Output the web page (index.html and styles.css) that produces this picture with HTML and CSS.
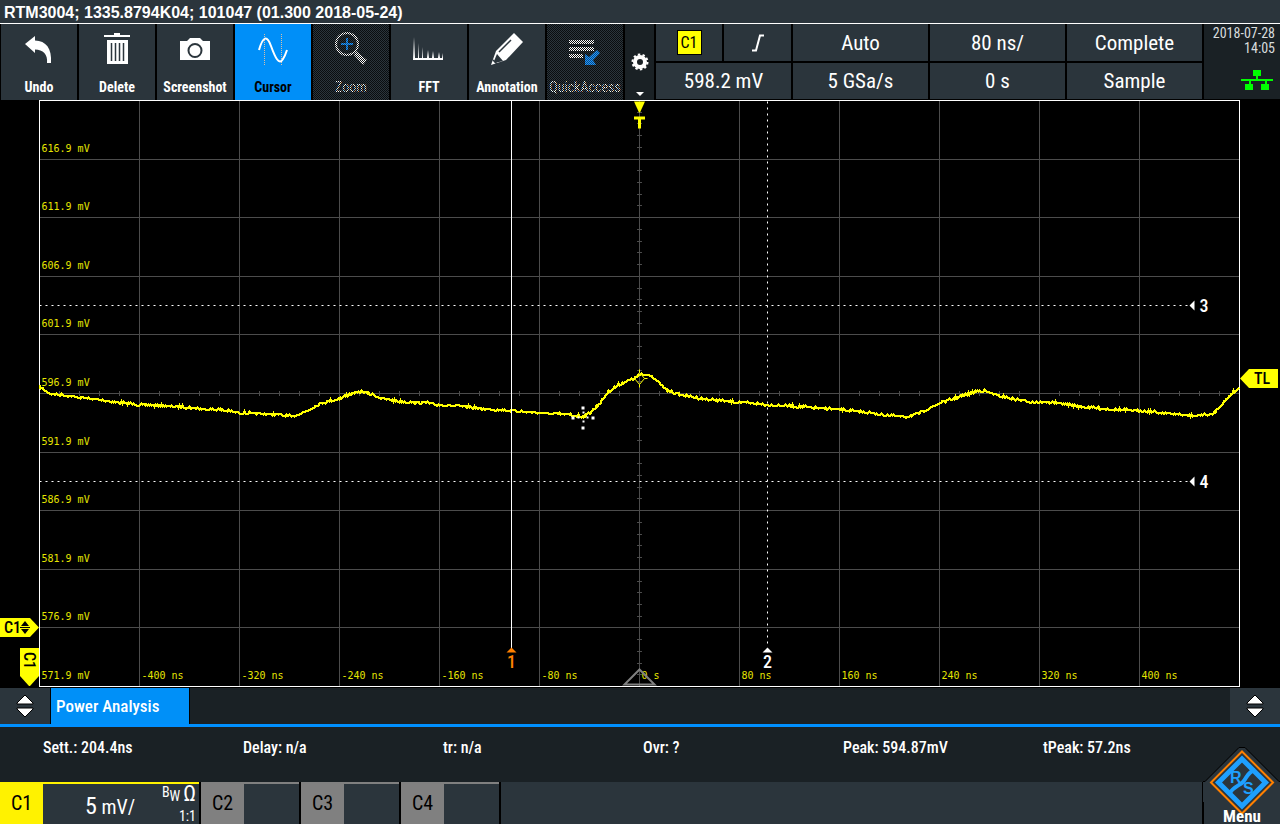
FILE: index.html
```html
<!DOCTYPE html>
<html lang="en">
<head>
  <meta charset="UTF-8">
  <title>RTM3004</title>
  <link rel="stylesheet" href="styles.css">
</head>
<body>

  <header class="title">RTM3004; 1335.8794K04; 101047 (01.300 2018-05-24)</header>

  <div class="topbar">
    <nav class="tools">
      <button class="tool">
        <svg width="36" height="36" viewBox="0 0 36 36"><path d="M4 12 14 4v4.500C25 9 31 16 30 31h-4c1-9-4-13-12-13.500V21z" fill="#fff"/></svg>
        <span>Undo</span>
      </button>
      <button class="tool">
        <svg width="36" height="36" viewBox="0 0 36 36"><path d="M5 3h10V1h6v2h10v2H5zM8 8h21v24H8z" fill="#fff"/><path d="M12.500 11v18M16.500 11v18M20.500 11v18M24.500 11v18" stroke="#2b353c" stroke-width="1.500"/></svg>
        <span>Delete</span>
      </button>
      <button class="tool">
        <svg width="36" height="36" viewBox="0 0 36 36"><path d="M3 9h7l3-3h10l3 3h7v19H3z" fill="#fff"/><circle cx="18" cy="18.500" r="6.500" fill="none" stroke="#2b353c" stroke-width="2"/></svg>
        <span>Screenshot</span>
      </button>
      <button class="tool active">
        <svg width="36" height="36" viewBox="0 0 36 36"><path d="M9.500 2v31M26.500 2v31" stroke="#d8c0a8" stroke-dasharray="1 1"/><path d="M4 18C8 4 12 3 16 14s8 20 12 13c2-3 3-6 4-9" fill="none" stroke="#fff" stroke-width="2"/></svg>
        <span>Cursor</span>
      </button>
      <button class="tool disabled" disabled>
        <svg width="36" height="36" viewBox="0 0 36 36">
          <defs>
            <pattern id="dither" width="2" height="2" patternUnits="userSpaceOnUse"><path d="M0 0h1v1H0zM1 1h1v1H1z" fill="#fff"/></pattern>
            <pattern id="dither-blue" width="2" height="2" patternUnits="userSpaceOnUse"><path d="M0 0h2v2H0z" fill="#0c4a80"/><path d="M0 0h1v1H0zM1 1h1v1H1z" fill="#1e96ff"/></pattern>
          </defs>
          <circle cx="14" cy="12" r="11" fill="none" stroke="url(#dither)" stroke-width="2"/>
          <path d="M13 6h2v5h5v2h-5v5h-2v-5H8v-2h5z" fill="url(#dither-blue)"/>
          <path d="m23 19 11 9-4 5-9-10z" fill="url(#dither)"/>
        </svg>
        <span>Zoom</span>
      </button>
      <button class="tool">
        <svg width="36" height="36" viewBox="0 0 36 36"><path d="M2 28 3 5l1 21h3V11l1 15h3V15l1 11h4l1-8 1 8h3l1-7 1 7h4l1-6 1 6h2l1-5v7z" fill="#fff"/></svg>
        <span>FFT</span>
      </button>
      <button class="tool">
        <svg width="36" height="36" viewBox="0 0 36 36"><path d="M25 1 34 10 17 28 2 33 7 19z" fill="#fff"/><path d="m8 22 6 7-8 2-1-2z" fill="#2b353c"/><path d="m10 20 12-12M4 28l4 4" stroke="#2b353c" stroke-width="1.500"/></svg>
        <span>Annotation</span>
      </button>
      <button class="tool disabled" disabled>
        <svg width="36" height="36" viewBox="0 0 36 36">
          <path d="M2 8h25v4H2zM2 15h25v4H2zM2 22h14v4H2z" fill="url(#dither)"/>
          <path d="m30 18 3 3-7 7 3 5H18V22l4 3z" fill="url(#dither-blue)"/>
        </svg>
        <span>QuickAccess</span>
      </button>
      <button class="gear" aria-label="Toolbar settings">
        <svg width="18" height="18" viewBox="0 0 18 18"><circle cx="9" cy="9" r="5" fill="none" stroke="#fff" stroke-width="4"/><circle cx="9" cy="9" r="7.500" fill="none" stroke="#fff" stroke-width="2" stroke-dasharray="2.400 2.310"/></svg>
        <svg width="8" height="4" viewBox="0 0 8 4"><path d="M0 0h8L4 4z" fill="#fff"/></svg>
      </button>
    </nav>

    <div class="readouts">
      <button><span class="source">C1</span></button>
      <button aria-label="Rising edge">
        <svg width="14" height="18" viewBox="0 0 14 18"><path d="M1 16.500h4L9 1.500h4" fill="none" stroke="#fff" stroke-width="2"/></svg>
      </button>
      <button>Auto</button>
      <button>80 ns/</button>
      <button>Complete</button>
      <button class="wide">598.2 mV</button>
      <button>5 GSa/s</button>
      <button>0 s</button>
      <button>Sample</button>
    </div>

    <div class="clock">
      <span>2018-07-28</span>
      <span>14:05</span>
      <svg width="32" height="20" viewBox="0 0 32 20"><path d="M12 0h8v6h-3v3h15v2h-6v3h2v6h-8v-6h4v-3H10v3h2v6H4v-6h4v-3H0V9h15V6h-3z" fill="#0f0"/></svg>
    </div>
  </div>

  <svg class="scope" viewBox="0 0 1280 588">
    <g transform="translate(39.500 .500)">
      <g id="grid" class="grid"></g>
      <rect class="frame" width="1200" height="586"/>
      <g id="labels" class="axis-label"></g>

      <path class="position" d="M600 569l15 15h-30z"/>
      <path id="trace" class="trace"/>
      <path class="trigger-point" d="M600 272l5 6-5 6-5-6zM600 269v3M600 284v3M605 278h3"/>

      <path class="cursor-line" d="M472 0v548"/>
      <path class="cursor-line dotted" d="M728 1v546M0 205h1150M0 381h1150"/>
      <path d="M472 547l5 5h-10z" fill="#ff8000"/>
      <path d="M728 547l5 5h-10zM1150 205l5-5v10zM1150 381l5-5v10z" fill="#fff"/>
      <text class="cursor-name selected" x="472" y="567" text-anchor="middle">1</text>
      <text class="cursor-name" x="728" y="567" text-anchor="middle">2</text>
      <text class="cursor-name" x="1160" y="211">3</text>
      <text class="cursor-name" x="1160" y="387">4</text>

      <!-- mouse pointer -->
      <path d="M542 306h3v3h-3zM543 311h2v2h-2zM532 316h3v3h-3zM538 316h2v2h-2zM547 316h2v2h-2zM552 316h3v3h-3zM543 320h2v2h-2zM542 326h3v3h-3z" fill="#fff"/>

      <path d="M594.500 1h11l-5 11h-1z" fill="#ff0"/>
      <path d="M594.500 17.500h11M600 17v11" stroke="#ff0" stroke-width="3"/>
    </g>

    <path class="tag" d="M0 518h30l9 9.500-9 9.500H0z"/>
    <text class="tag-name" x="4" y="533">C1</text>
    <path d="M25 521l4 5h-8zM21 529h8l-4 5zM20 527h10v1H20z"/>
    <path class="tag" d="M20 548h19v28l-9 10h-1l-9-10z"/>
    <text class="tag-name" transform="translate(24 552) rotate(90)">C1</text>
    <path class="tag" d="M1240 278.500l9-9.500h29v19h-29z"/>
    <text class="tag-name" x="1254" y="284">TL</text>
  </svg>

  <div class="tabs">
    <button class="updown" aria-label="Previous tab">
      <svg width="18" height="24" viewBox="0 0 18 24"><path d="M9 1l8 8v1H1V9zM1 14h16v1l-8 8-8-8z" fill="#fff" stroke="#000"/></svg>
    </button>
    <button class="tab">Power Analysis</button>
    <button class="updown last" aria-label="Next tab">
      <svg width="18" height="24" viewBox="0 0 18 24"><path d="M9 1l8 8v1H1V9zM1 14h16v1l-8 8-8-8z" fill="#fff" stroke="#000"/></svg>
    </button>
  </div>

  <div class="results">
    <span>Sett.: 204.4ns</span>
    <span>Delay: n/a</span>
    <span>tr: n/a</span>
    <span>Ovr: ?</span>
    <span>Peak: 594.87mV</span>
    <span>tPeak: 57.2ns</span>
  </div>

  <footer class="channels">
    <button class="channel on">
      <span class="channel-name">C1</span>
      <span class="channel-scale"><b>5</b> mV/</span>
      <span class="channel-info">
        <span class="coupling"><span>B<sub>W</sub></span><i>Ω</i></span>
        <span>1:1</span>
      </span>
    </button>
    <button class="channel"><span class="channel-name">C2</span></button>
    <button class="channel"><span class="channel-name">C3</span></button>
    <button class="channel"><span class="channel-name">C4</span></button>
    <div class="spacer"></div>
    <button class="menu">
      <svg class="logo" width="78" height="78" viewBox="0 0 78 78">
        <path d="M0 36h2L36 2h6l34 34h2v20H0z" fill="#2b353c"/>
        <path d="M0 35.500h2L36 1.500h6l34 34h2" fill="none" stroke="#000"/>
        <path d="M39 5.500 70 36.500 39 67.500 8 36.500z" fill="#2b353c" stroke="#ff8000" stroke-width="2"/>
        <path d="M39 13 62.500 36.500 39 60 15.500 36.500z" fill="none" stroke="#1ea0ff" stroke-width="5"/>
        <path d="M52 24c-8 2-8 8-12 12s-9 4-14 12" fill="none" stroke="#1ea0ff" stroke-width="4"/>
        <text x="27" y="37">R</text>
        <text x="40" y="48">S</text>
      </svg>
      <span>Menu</span>
    </button>
  </footer>

<script src="scope.js"></script>
</body>
</html>
```

FILE: styles.css
```css
* {
  box-sizing: border-box;
}

body {
  margin: 0;
  background: #000;
  color: #fff;
  font-family: "Liberation Sans Narrow", "Roboto Condensed", "Open Sans Condensed", "Liberation Sans", sans-serif;
}

button {
  margin: 0;
  padding: 0;
  border: none;
  background: #2b353c;
  color: inherit;
  font: inherit;
}

svg {
  display: block;
}

.title {
  height: 24px;
  padding-left: 4px;
  border-bottom: 1px solid #fff;
  background: #2b353c;
  font: bold 16px/25px "Liberation Sans", sans-serif;
  white-space: nowrap;
}

/* top bar */

.topbar {
  display: flex;
  gap: 2px;
  height: 76px;
  padding-left: 1px;
}

.tools {
  display: flex;
  gap: 2px;
}

.tool {
  position: relative;
  display: flex;
  flex-direction: column;
  align-items: center;
  justify-content: space-between;
  width: 76px;
  padding: 8px 0 4px;
  font-size: 14px;
  font-weight: bold;
  line-height: 18px;
}

.tool.active {
  background: #008ff8;
}

.tool.active span {
  color: #000;
}

.tool.disabled {
  color: #fff;
  font-weight: normal;
}

.tool.disabled svg {
  position: relative;
  z-index: 1;
}

.tool.disabled::after {
  content: "";
  position: absolute;
  inset: 0;
  background: repeating-conic-gradient(#0a0d0f 0 25%, transparent 0 50%) 0 0 / 2px 2px;
}

.gear {
  display: flex;
  flex-direction: column;
  align-items: center;
  justify-content: flex-end;
  gap: 21px;
  width: 29px;
  padding-bottom: 4px;
  background: #1a2125;
}

.readouts {
  flex: 1;
  display: grid;
  grid-template-columns: 66px 67px 1fr 1fr 1fr;
  grid-template-rows: 37px 36px;
  gap: 2px;
  font-size: 21px;
}

.readouts svg {
  margin: auto;
}

.readouts .wide {
  grid-column: span 2;
}

.source {
  display: block;
  width: 25px;
  margin: auto;
  border: 1px solid #000;
  background: #ff0;
  color: #000;
  font-size: 16px;
  line-height: 23px;
}

.clock {
  display: flex;
  flex-direction: column;
  align-items: flex-end;
  width: 76px;
  padding: 2px 5px 0 0;
  margin-bottom: 1px;
  background: #1a2125;
  color: #d8dcde;
  font-size: 14px;
  line-height: 15px;
  white-space: nowrap;
}

.clock svg {
  flex: none;
  margin: 14px 2px 0;
}

/* waveform display */

.scope {
  width: 100%;
}

.grid {
  stroke: #4c4c4c;
}

.frame {
  fill: none;
  stroke: #fff;
}

.axis-label {
  fill: #e6e600;
  font: 10px "DejaVu Sans Mono", monospace;
}

.trace {
  fill: none;
  stroke: #ff0;
  stroke-width: 2;
  shape-rendering: crispEdges;
}

.trigger-point {
  fill: none;
  stroke: #ff0;
}

.position {
  fill: none;
  stroke: #808080;
  stroke-width: 2;
}

.cursor-line {
  fill: none;
  stroke: #fff;
}

.dotted {
  stroke-dasharray: 2 4;
}

.cursor-name {
  fill: #fff;
  font-size: 18px;
  font-weight: 500;
}

.selected {
  fill: #ff8000;
}

.tag {
  fill: #ff0;
}

.tag-name {
  font-size: 16px;
  font-weight: 500;
}

/* tabs and results */

.tabs {
  display: flex;
  height: 39px;
  border-bottom: 3px solid #0090ff;
  background: #1a2125;
}

.updown {
  width: 51px;
  border-right: 1px solid #000;
}

.updown svg {
  margin: auto;
}

.updown.last {
  width: 50px;
  border-right: none;
  margin-left: auto;
}

.tab {
  width: 139px;
  padding-left: 5px;
  border-right: 1px solid #000;
  background: #0090f8;
  font-size: 17px;
  font-weight: 500;
  text-align: left;
}

.results {
  display: grid;
  grid-template-columns: repeat(6, 1fr);
  height: 55px;
  padding: 11px 37px 0 43px;
  background: #1a2125;
  font-size: 16px;
  font-weight: 500;
  line-height: 20px;
}

/* channel bar */

.channels {
  display: flex;
  gap: 2px;
  height: 42px;
}

.channel {
  display: flex;
  width: 98px;
  border-top: 2px solid #808080;
}

.channel.on {
  width: 199px;
  border-color: #fff200;
}

.channel-name {
  width: 43px;
  height: 40px;
  background: #808080;
  color: #000;
  font-size: 20px;
  line-height: 38px;
}

.on .channel-name {
  background: #fff200;
}

.channel-scale {
  flex: 1;
  padding-left: 42px;
  font-size: 20px;
  line-height: 44px;
  text-align: left;
}

.channel-scale b {
  font-size: 24px;
  font-weight: normal;
}

.channel-info {
  display: flex;
  flex-direction: column;
  justify-content: space-between;
  align-items: flex-end;
  height: 40px;
  padding-right: 3px;
  font-size: 14px;
  line-height: 16px;
}

.coupling {
  display: flex;
  gap: 3px;
}

.coupling sub {
  font-size: 14px;
  line-height: 8px;
}

.coupling i {
  font-size: 22px;
  font-style: normal;
  line-height: 20px;
}

.spacer {
  flex: 1;
  background: #2b353c;
}

.menu {
  position: relative;
  display: flex;
  align-items: flex-end;
  justify-content: center;
  width: 76px;
  font-size: 17px;
  font-weight: bold;
  line-height: 16px;
}

.menu span {
  position: relative;
}

.logo {
  position: absolute;
  left: -1px;
  bottom: 0;
}

.logo text {
  fill: #1ea0ff;
  font: bold 16px "Liberation Sans", sans-serif;
}
```

FILE: scope.js
```js
const WIDTH = 1200;
const HEIGHT = 586;
const DIV_X = WIDTH / 12;
const DIV_Y = HEIGHT / 10;

// grid lines and the small ticks on both centre axes
let grid = "";
for (let i = 1; i < 12; i++) {
  grid += `M${i * DIV_X} 0V${HEIGHT}`;
}
for (let i = 1; i < 10; i++) {
  grid += `M0 ${Math.round(i * DIV_Y)}H${WIDTH}`;
}
for (let x = 20; x < WIDTH; x += 20) {
  grid += `M${x} 290.500v5`;
}
for (let i = 1; i < 50; i++) {
  grid += `M597.500 ${Math.round(i * DIV_Y / 5)}h5`;
}
document.getElementById("grid").innerHTML = `<path d="${grid}"/>`;

let labels = "";
for (let i = 1; i <= 10; i++) {
  const mv = (621.9 - i * 5).toFixed(1);
  labels += `<text x="2" y="${Math.round(i * DIV_Y) - 8}">${mv} mV</text>`;
}
for (let i = 1; i < 12; i++) {
  const t = (i - 6) * 80;
  labels += `<text x="${i * DIV_X + 2}" y="578">${t} ${t === 0 ? "s" : "ns"}</text>`;
}
document.getElementById("labels").innerHTML = labels;

const points = [
  [0, 286], [10, 293], [20, 294], [35, 296], [60, 299], [80, 302], [100, 304],
  [140, 306], [160, 308], [180, 309], [200, 312], [240, 314], [253, 316],
  [270, 309], [280, 303], [300, 298], [312, 293], [322, 291], [330, 293],
  [340, 297], [360, 301], [387, 302], [397, 304], [420, 305], [440, 308],
  [460, 309], [500, 312], [530, 314], [544, 316], [552, 311], [561, 302],
  [569, 291], [578, 285], [586, 281], [594, 278], [600, 274], [611, 274],
  [618, 281], [628, 290], [641, 294], [661, 298], [681, 300], [728, 304],
  [761, 306], [801, 309], [821, 311], [851, 315], [868, 316], [881, 312],
  [901, 302], [921, 296], [936, 291], [945, 290], [956, 294], [971, 298],
  [991, 301], [1016, 302], [1041, 306], [1076, 309], [1101, 310], [1131, 313],
  [1151, 315], [1173, 314], [1183, 303], [1193, 292], [1200, 288]
];

// same noise on every load
let seed = 7;
function noise() {
  seed = (seed * 16807) % 2147483647;
  return seed / 2147483647 - 0.5;
}

let d = "";
let p = 0;
for (let x = 0; x <= WIDTH; x++) {
  while (p < points.length - 2 && x > points[p + 1][0]) p++;
  const [x0, y0] = points[p];
  const [x1, y1] = points[p + 1];
  const y = y0 + (y1 - y0) * (x - x0) / (x1 - x0) + noise() * 2.2;
  d += `${x ? "L" : "M"}${x} ${Math.round(y)}`;
}
document.getElementById("trace").setAttribute("d", d);
```
